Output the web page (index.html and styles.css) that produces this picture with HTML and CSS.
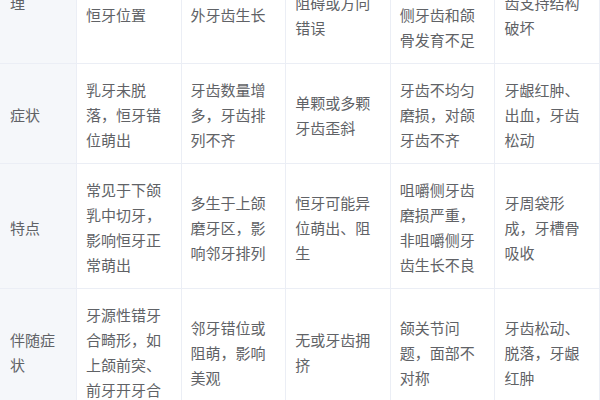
FILE: index.html
```html
<!DOCTYPE html>
<html lang="zh-CN">
<head>
<meta charset="utf-8">
<title>牙齿问题对比</title>
<link rel="stylesheet" href="styles.css">
</head>
<body>
<div class="viewport">
  <div class="table">
    <div class="cell head">发病原理</div>
    <div class="cell">乳牙滞留，阻挡并占据恒牙位置</div>
    <div class="cell">牙胚发育异常，导致额外牙齿生长</div>
    <div class="cell">恒牙萌出时受到邻牙的阻碍或方向错误</div>
    <div class="cell">长期习惯用单侧咀嚼，导致非咀嚼侧牙齿和颌骨发育不足</div>
    <div class="cell">牙菌斑引起炎症，致牙齿支持结构破坏</div>

    <div class="cell head">症状</div>
    <div class="cell">乳牙未脱落，恒牙错位萌出</div>
    <div class="cell">牙齿数量增多，牙齿排列不齐</div>
    <div class="cell">单颗或多颗牙齿歪斜</div>
    <div class="cell">牙齿不均匀磨损，对颌牙齿不齐</div>
    <div class="cell">牙龈红肿、出血，牙齿松动</div>

    <div class="cell head">特点</div>
    <div class="cell">常见于下颌乳中切牙，影响恒牙正常萌出</div>
    <div class="cell">多生于上颌磨牙区，影响邻牙排列</div>
    <div class="cell">恒牙可能异位萌出、阻生</div>
    <div class="cell">咀嚼侧牙齿磨损严重，非咀嚼侧牙齿生长不良</div>
    <div class="cell">牙周袋形成，牙槽骨吸收</div>

    <div class="cell head">伴随症状</div>
    <div class="cell">牙源性错牙合畸形，如上颌前突、前牙开牙合</div>
    <div class="cell">邻牙错位或阻萌，影响美观</div>
    <div class="cell">无或牙齿拥挤</div>
    <div class="cell">颌关节问题，面部不对称</div>
    <div class="cell">牙齿松动、脱落，牙龈红肿</div>
  </div>
</div>
</body>
</html>
```

FILE: styles.css
```css
html, body {
  margin: 0;
  padding: 0;
  background: #ffffff;
}

.viewport {
  width: 600px;
  height: 400px;
  overflow: hidden;
}

.table {
  display: grid;
  grid-template-columns: 77px repeat(5, minmax(0, 1fr));
  width: 600px;
  margin-top: -86px;
  font-family: "Noto Sans CJK SC", "Noto Sans", sans-serif;
  font-size: 15px;
  line-height: 25px;
  color: #606266;
}

.cell {
  box-sizing: border-box;
  display: flex;
  flex-direction: column;
  justify-content: center;
  padding: 13px 9px 11px;
  border-right: 1px solid #ebeef5;
  border-bottom: 1px solid #ebeef5;
  background: #ffffff;
}

.head {
  background: #f5f7fa;
  padding-left: 10px;
}
```
